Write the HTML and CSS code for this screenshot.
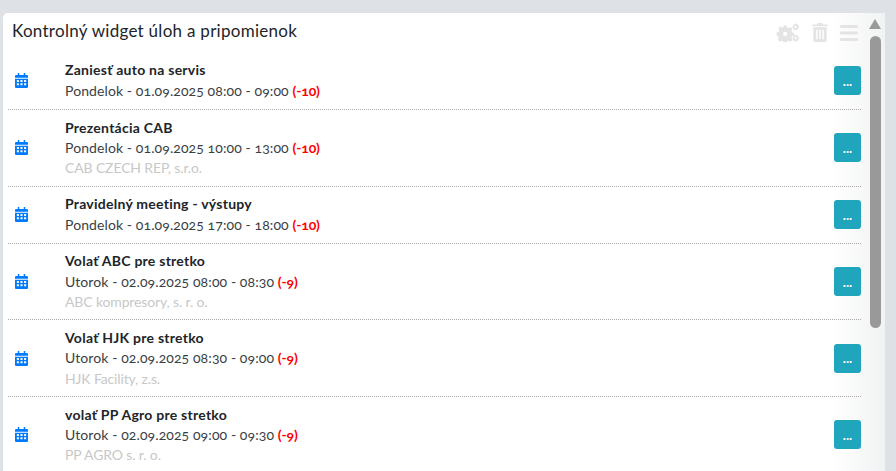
FILE: index.html
```html
<!DOCTYPE html>
<html lang="sk">
<head>
<meta charset="utf-8">
<title>Kontrolný widget</title>
<link rel="stylesheet" href="styles.css">
</head>
<body>
<svg class="defs" width="0" height="0" aria-hidden="true">
  <symbol id="cal" viewBox="0 0 14 16">
    <path d="M3 0h1.600v2h4.800V0H11v2h1.600c.8 0 1.400.6 1.400 1.400V5H0V3.400C0 2.600.6 2 1.400 2H3zM0 6h14v8.600c0 .8-.6 1.400-1.400 1.400H1.400C.6 16 0 15.400 0 14.600z"/>
    <path fill="#fff" d="M2 7.500h2.200v2H2zM5.900 7.500h2.200v2H5.900zM9.800 7.500H12v2H9.800zM2 11h2.200v2H2zM5.900 11h2.200v2H5.900zM9.800 11H12v2H9.800z"/>
  </symbol>
</svg>
<main class="widget">
  <div class="head">
    <h1 class="title">Kontrolný widget úloh a pripomienok</h1>
    <div class="tools">
      <svg class="tool gears" viewBox="0 0 24 20"><path d="M7.500 2.500h3l.6 2.200 1.500.7 2.100-1.100 2 2-1.100 2.100.7 1.500 2.200.6v3l-2.200.6-.7 1.500 1.100 2.100-2 2-2.100-1.100-1.500.7-.6 2.200h-3l-.6-2.200-1.500-.7-2.100 1.100-2-2 1.100-2.100-.7-1.500L0 13v-3l2.200-.6.700-1.500L1.800 5.800l2-2 2.100 1.100 1.500-.7zM9 9.300a2.200 2.200 0 1 0 0 4.400 2.200 2.200 0 0 0 0-4.400z" fill-rule="evenodd"/><path fill-rule="evenodd" d="M20 0l1 1 1.500.2.300 1.500L24 4l-1.200 1.300-.3 1.500-1.500.2-1 1-1-1-1.500-.2-.3-1.500L16.500 4l1.200-1.300.3-1.500L19.500 1zM20 2.800a1.200 1.200 0 1 0 0 2.400 1.200 1.200 0 0 0 0-2.400zM20 12l1 1 1.500.2.300 1.500L24 16l-1.200 1.300-.3 1.500-1.500.2-1 1-1-1-1.500-.2-.3-1.500L16.500 16l1.200-1.300.3-1.500 1.500-.2zM20 14.800a1.200 1.200 0 1 0 0 2.400 1.200 1.200 0 0 0 0-2.400z"/></svg>
      <svg class="tool trash" viewBox="0 0 16 20"><path fill-rule="evenodd" d="M5.500 0h5l.8 1.500H16v2H0v-2h4.700zM1 4.500h14V18.500c0 .8-.7 1.500-1.500 1.500h-11C1.700 20 1 19.300 1 18.500zM4 7v10h1.500V7zm3.250 0v10h1.500V7zM10.500 7v10H12V7z"/></svg>
      <svg class="tool bars" viewBox="0 0 18 16"><rect width="18" height="3" rx="1"/><rect y="6.500" width="18" height="3" rx="1"/><rect y="13" width="18" height="3" rx="1"/></svg>
    </div>
  </div>
  <div class="rows">
    <article class="row">
      <svg class="cal"><use href="#cal"/></svg>
      <div class="info">
        <div class="name">Zaniesť auto na servis</div>
        <div class="when">Pondelok - 01.09.2025 08:00 - 09:00 <b class="late">(-10)</b></div>
      </div>
      <button class="more">...</button>
    </article>
    <article class="row">
      <svg class="cal"><use href="#cal"/></svg>
      <div class="info">
        <div class="name">Prezentácia CAB</div>
        <div class="when">Pondelok - 01.09.2025 10:00 - 13:00 <b class="late">(-10)</b></div>
        <div class="firm">CAB CZECH REP, s.r.o.</div>
      </div>
      <button class="more">...</button>
    </article>
    <article class="row">
      <svg class="cal"><use href="#cal"/></svg>
      <div class="info">
        <div class="name">Pravidelný meeting - výstupy</div>
        <div class="when">Pondelok - 01.09.2025 17:00 - 18:00 <b class="late">(-10)</b></div>
      </div>
      <button class="more">...</button>
    </article>
    <article class="row">
      <svg class="cal"><use href="#cal"/></svg>
      <div class="info">
        <div class="name">Volať ABC pre stretko</div>
        <div class="when">Utorok - 02.09.2025 08:00 - 08:30 <b class="late">(-9)</b></div>
        <div class="firm">ABC kompresory, s. r. o.</div>
      </div>
      <button class="more">...</button>
    </article>
    <article class="row">
      <svg class="cal"><use href="#cal"/></svg>
      <div class="info">
        <div class="name">Volať HJK pre stretko</div>
        <div class="when">Utorok - 02.09.2025 08:30 - 09:00 <b class="late">(-9)</b></div>
        <div class="firm">HJK Facility, z.s.</div>
      </div>
      <button class="more">...</button>
    </article>
    <article class="row">
      <svg class="cal"><use href="#cal"/></svg>
      <div class="info">
        <div class="name">volať PP Agro pre stretko</div>
        <div class="when">Utorok - 02.09.2025 09:00 - 09:30 <b class="late">(-9)</b></div>
        <div class="firm">PP AGRO s. r. o.</div>
      </div>
      <button class="more">...</button>
    </article>
  </div>
  <div class="scrollbar">
    <span class="arrow"></span>
    <span class="thumb"></span>
  </div>
</main>
</body>
</html>
```
FILE: styles.css
```css
* { box-sizing: border-box; }
html, body { height: 100%; }
body {
  margin: 0;
  overflow: hidden;
  background: #dee2e6;
  font-family: "Lato", "Open Sans", sans-serif;
  color: #212529;
  padding: 13px 11px 0 3px;
}
.defs { position: absolute; }
.widget {
  position: relative;
  height: 100%;
  overflow: hidden;
  background: linear-gradient(to right, #fff 0, #fff 94%, #f1f2f3 100%);
  border-top-left-radius: 5px;
  padding-left: 5px;
}
.head {
  display: flex;
  justify-content: space-between;
  height: 39.800px;
  padding-right: 27px;
}
.title {
  margin: 7px 0 0 4px;
  font-size: 17px;
  line-height: 21px;
  font-weight: 400;
  letter-spacing: .28px;
}
.tools {
  display: flex;
  align-items: flex-start;
  gap: 12px;
  padding-top: 10px;
}
.tool { display: block; fill: #e4e4e4; }
.gears { width: 24px; height: 19px; }
.trash { width: 16px; height: 19px; }
.bars { width: 18px; height: 16px; margin-top: 2px; }
.rows { width: 853px; }
.row {
  display: flex;
  align-items: center;
  border-bottom: 1px dotted #aaa;
  padding: 7.600px 0 7.800px;
}
.cal {
  flex: none;
  width: 13px;
  height: 15px;
  margin-left: 7px;
  fill: #007bff;
}
.info {
  flex: 1;
  margin-left: 37px;
  font-variant-numeric: oldstyle-nums;
}
.name {
  font-size: 14px;
  line-height: 20.400px;
  font-weight: 700;
  letter-spacing: .25px;
  color: #212529;
}
.when {
  font-size: 14px;
  line-height: 20.400px;
  font-weight: 400;
  letter-spacing: .1px;
  color: #3a3f45;
}
.late { color: #ff0000; font-weight: 700; letter-spacing: -.14px; }
.firm {
  font-size: 14px;
  line-height: 19.400px;
  letter-spacing: -.14px;
  font-weight: 400;
  color: #c8c8c8;
}
.more {
  flex: none;
  width: 27px;
  height: 29px;
  padding: 0;
  border: 0;
  border-radius: 3px;
  background: #1fa6bd;
  color: #fff;
  font: 700 13px "Lato", sans-serif;
}
.scrollbar {
  position: absolute;
  top: 0;
  right: 4px;
  width: 11px;
  height: 100%;
}
.arrow {
  position: absolute;
  top: 6px;
  left: -1px;
  border-left: 6.500px solid transparent;
  border-right: 6.500px solid transparent;
  border-bottom: 10px solid #999;
}
.thumb {
  position: absolute;
  top: 23px;
  left: 0;
  width: 11px;
  height: 292px;
  border-radius: 6px;
  background: #999;
}
```
